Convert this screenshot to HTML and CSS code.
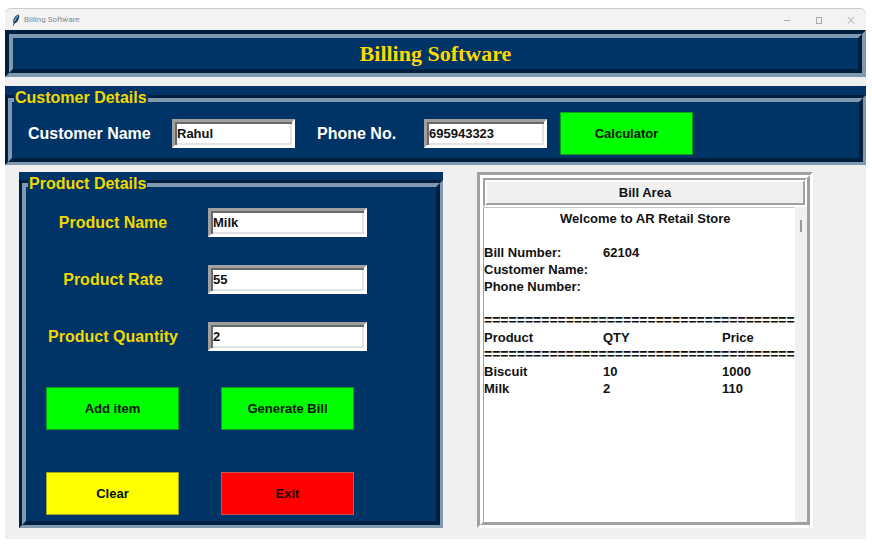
FILE: index.html
```html
<!DOCTYPE html>
<html lang="en">
<head>
<meta charset="utf-8">
<title>Billing Software</title>
<link rel="stylesheet" href="styles.css">
</head>
<body>
<div class="window">
  <div class="titlebar">
    <svg class="feather" viewBox="0 0 8 12" aria-hidden="true">
      <path d="M6.8 0.3C4 1.2 1.2 4 1.2 7.4L2.2 9.6C5 9 6.9 5.4 7.3 2.4Z" fill="#24405f"/>
      <path d="M6.2 1.4C4.4 3 3.2 5 2.4 7.6" stroke="#7fa8cf" stroke-width="1.2" fill="none"/>
      <path d="M2.4 7.4L1.4 11.6" stroke="#222" stroke-width="0.8" fill="none"/>
    </svg>
    <span class="caption">Billing Software</span>
    <div class="controls">
      <button type="button" aria-label="Minimize"><svg viewBox="0 0 10 10"><path d="M2 5.5H8"/></svg></button>
      <button type="button" aria-label="Maximize"><svg viewBox="0 0 10 10"><rect x="2.5" y="2.5" width="5" height="6"/></svg></button>
      <button type="button" aria-label="Close"><svg viewBox="0 0 10 10"><path d="M2 2L8 8.500M8 2L2 8.500"/></svg></button>
    </div>
  </div>

  <header class="groove banner">
    <h1 class="groove-inner">Billing Software</h1>
  </header>

  <fieldset class="panel customer">
    <legend class="legend">Customer Details</legend>
    <div class="groove">
      <div class="groove-inner customer-row">
        <label class="customer-label" for="cname">Customer Name</label>
        <input class="entry" id="cname" type="text" value="Rahul">
        <label class="phone-label" for="phone">Phone No.</label>
        <input class="entry" id="phone" type="text" value="695943323">
        <button class="btn green" type="button">Calculator</button>
      </div>
    </div>
  </fieldset>

  <main class="content">
    <fieldset class="panel product">
      <legend class="legend">Product Details</legend>
      <div class="groove">
        <div class="groove-inner">
          <div class="fields">
            <label for="pname">Product Name</label>
            <input class="entry" id="pname" type="text" value="Milk">
            <label for="rate">Product Rate</label>
            <input class="entry" id="rate" type="text" value="55">
            <label for="qty">Product Quantity</label>
            <input class="entry" id="qty" type="text" value="2">
          </div>
          <div class="actions">
            <button class="btn green" type="button">Add item</button>
            <button class="btn green" type="button">Generate Bill</button>
            <button class="btn yellow" type="button">Clear</button>
            <button class="btn red" type="button">Exit</button>
          </div>
        </div>
      </div>
    </fieldset>

    <section class="bill">
      <div class="bill-inner">
        <div class="bill-title"><h2>Bill Area</h2></div>
        <div class="bill-body">
          <div class="receipt">
            <p class="welcome">Welcome to AR Retail Store</p>
            <dl class="meta">
              <dt>Bill Number:</dt><dd>62104</dd>
              <dt>Customer Name:</dt><dd></dd>
              <dt>Phone Number:</dt><dd></dd>
            </dl>
            <table class="items">
              <colgroup><col class="tab"><col class="tab"><col></colgroup>
              <thead>
                <tr><td class="rule" colspan="3">======================================</td></tr>
                <tr><th>Product</th><th>QTY</th><th>Price</th></tr>
                <tr><td class="rule" colspan="3">======================================</td></tr>
              </thead>
              <tbody>
                <tr><td>Biscuit</td><td>10</td><td>1000</td></tr>
                <tr><td>Milk</td><td>2</td><td>110</td></tr>
              </tbody>
            </table>
          </div>
          <div class="scrollbar"><div class="thumb"></div></div>
        </div>
      </div>
    </section>
  </main>
</div>
</body>
</html>
```
FILE: styles.css
```css
* { box-sizing: border-box; }

body {
  margin: 0;
  padding: 8px 6px 6px 5px;
  background: #fff;
  font-family: "Liberation Sans", Arial, sans-serif;
  font-size: 13px;
  font-weight: bold;
  color: #111;
}

h1, h2, p, dl, dd, fieldset { margin: 0; }

.window {
  background: #f0f0f0;
  border-radius: 6px 6px 0 0;
  padding-bottom: 11px;
}

.titlebar {
  display: flex;
  align-items: center;
  height: 22px;
  padding: 0 6px 0 7px;
  background: #f3f3f3;
  border-top: 1px solid #ccc;
  border-radius: 6px 6px 0 0;
}
.feather { width: 8px; height: 12px; }
.caption {
  margin-left: 4px;
  font: 8px Roboto, "Noto Sans", sans-serif;
  color: #8a8a8a;
}
.controls { display: flex; gap: 14px; margin-left: auto; }
.controls button {
  display: flex;
  justify-content: center;
  width: 18px;
  padding: 0;
  border: 0;
  background: none;
}
.controls svg { width: 10px; height: 10px; fill: none; stroke: #aaa; stroke-width: 1; }

/* Two nested borders with opposite shading form the groove */
.groove {
  background: #003366;
  border: 4px solid;
  border-color: #001e3d #7f99b3 #7f99b3 #001e3d;
}
.groove-inner {
  border: 4px solid;
  border-color: #7f99b3 #001e3d #001e3d #7f99b3;
}

.banner h1 {
  font: bold 22px/31px "Liberation Serif", "Times New Roman", serif;
  color: #ffd700;
  text-align: center;
}

.panel {
  position: relative;
  min-width: 0;
  border: 0;
  padding: 9px 0 0;
  background: #003366;
}
.panel > .groove { border-width: 3px; }
.legend {
  position: absolute;
  top: 2px;
  left: 9px;
  padding: 0 1px;
  background: #003366;
  font-size: 16px;
  line-height: 20px;
  color: #f0d800;
}

.customer { margin-top: 9px; }
.customer-row {
  display: flex;
  align-items: center;
  padding: 10px 0 3px 16px;
  font-size: 16px;
  color: #fff;
}
.customer-label { width: 144px; }
.phone-label { width: 107px; margin-left: 22px; }
.customer-row .btn { margin-left: 13px; }

.entry {
  width: 123px;
  height: 29px;
  padding: 0 4px 0 2px;
  border: 3px solid;
  border-color: #a0a0a0 #fff #fff #a0a0a0;
  border-radius: 0;
  background: #fff;
  box-shadow: inset 2px 2px #696969, inset -2px -2px #e3e3e3;
  font: bold 13px "Liberation Sans", Arial, sans-serif;
  color: #111;
  outline: 0;
}

.btn {
  width: 133px;
  height: 43px;
  padding: 0;
  border: 1px solid;
  border-radius: 0;
  font: bold 13px "Liberation Sans", Arial, sans-serif;
  color: #001400;
}
.green { background: #0f0; border-color: #0a9c1c; }
.yellow { background: #ff0; border-color: #a5a51c; }
.red { background: #f00; border-color: #d05050; color: #200; }

.content {
  display: grid;
  grid-template-columns: 424fr 336fr;
  column-gap: 34px;
  padding: 7px 53px 0 14px;
}

.product { padding-top: 8px; }
.fields {
  display: grid;
  grid-template-columns: 174px 159px;
  gap: 28px 8px;
  align-items: center;
  padding-top: 21px;
  font-size: 16px;
  color: #f0d800;
  text-align: center;
}
.fields .entry { width: 100%; }
.actions {
  display: grid;
  grid-template-columns: 133px 133px;
  gap: 42px;
  padding: 36px 0 6px 20px;
}

.bill {
  display: flex;
  border: 3px solid;
  border-color: #a0a0a0 #fff #fff #a0a0a0;
}
.bill-inner {
  display: flex;
  flex-direction: column;
  flex: 1;
  min-width: 0;
  border: 3px solid;
  border-color: #fff #a0a0a0 #a0a0a0 #fff;
}
.bill-title {
  border: 2px solid;
  border-color: #a0a0a0 #fff #fff #a0a0a0;
}
.bill-title h2 {
  border: 2px solid;
  border-color: #fff #a0a0a0 #a0a0a0 #fff;
  padding-top: 1px;
  font-size: 13px;
  line-height: 20px;
  text-align: center;
}
.bill-body { display: flex; flex: 1; }
.receipt {
  flex: 1;
  min-width: 0;
  padding-top: 2px;
  border: 1px solid;
  border-color: #c8c8c8 #fff #fff #a0a0a0;
  background: #fff;
  line-height: 17px;
}
.welcome { padding-left: 76px; }
.meta {
  display: grid;
  grid-template-columns: 119px 1fr;
  grid-auto-rows: 17px;
  margin: 17px 0;
}
.items {
  width: 100%;
  table-layout: fixed;
  border-collapse: collapse;
}
.tab { width: 119px; }
.items th, .items td { height: 17px; padding: 0; text-align: left; }
.items .rule { font-size: 14px; white-space: nowrap; }

.scrollbar { width: 12px; padding: 13px 4px 0; }
.thumb { width: 2px; height: 12px; margin-left: 1px; background: #999; }
```
